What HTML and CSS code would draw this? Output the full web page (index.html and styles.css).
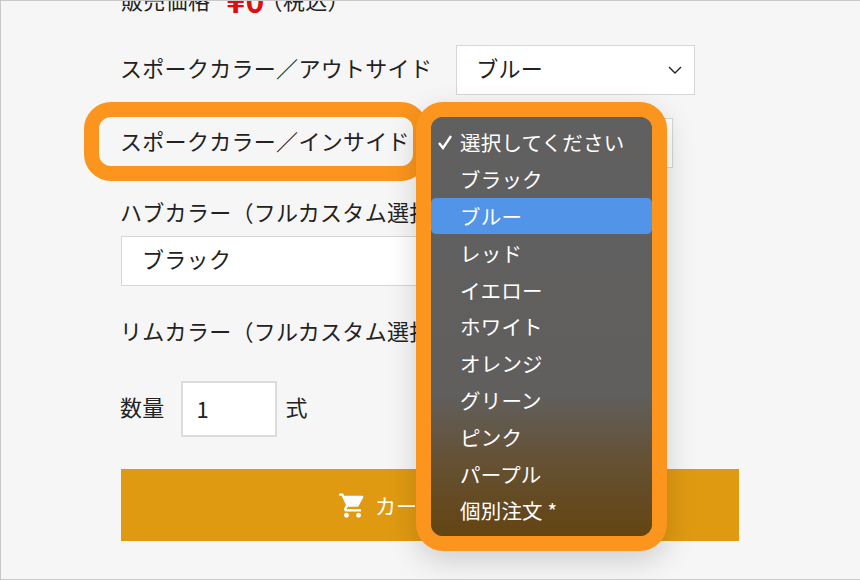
FILE: index.html
```html
<!DOCTYPE html>
<html lang="ja">
<head>
<meta charset="utf-8">
<title>スポークカラー選択</title>
<link rel="stylesheet" href="styles.css">
</head>
<body>
<div class="page">
  <form class="form">
    <div class="price-row"><span>販売価格</span><strong class="price">¥0</strong><span class="tax">（税込）</span></div>
    <div class="row row-first">
      <span class="label">スポークカラー／アウトサイド</span>
      <div class="select select-a"><span>ブルー</span><svg class="chev" width="14" height="8" viewBox="0 0 14 8"><path d="M1 1l6 6 6-6" fill="none" stroke="#222" stroke-width="1.4"/></svg></div>
    </div>
    <div class="row row-second">
      <span class="label">スポークカラー／インサイド</span>
      <div class="select select-b"><span>選択してください</span></div>
    </div>
    <div class="label stacked-label">ハブカラー（フルカスタム選択）</div>
    <div class="select select-c"><span>ブラック</span></div>
    <div class="label rim-label">リムカラー（フルカスタム選択）</div>
    <div class="qty-row">
      <span class="label qty-label">数量</span>
      <div class="qty-input">1</div>
      <span class="label qty-label">式</span>
    </div>
    <div class="cart-btn">
      <svg class="cart-icon" width="29" height="29" viewBox="0 0 24 24"><path fill="#fff" d="M7 18c-1.1 0-2 .9-2 2s.9 2 2 2 2-.9 2-2-.9-2-2-2zM1 2v2h2l3.6 7.59-1.35 2.45c-.16.28-.25.61-.25.96 0 1.1.9 2 2 2h12v-2H7.42c-.14 0-.25-.11-.25-.25l.03-.12.9-1.63h7.45c.75 0 1.41-.41 1.75-1.03l3.58-6.49A1 1 0 0 0 20 4H5.21l-.94-2H1zm16 16c-1.1 0-2 .9-2 2s.9 2 2 2 2-.9 2-2-.9-2-2-2z"/></svg>
      <span>カートに入れる</span>
    </div>
  </form>

  <div class="label-highlight"></div>

  <div class="menu-frame">
    <ul class="menu">
      <li class="item"><svg class="check" width="17" height="16" viewBox="0 0 17 16"><path d="M2 9l4 5 8-12" fill="none" stroke="#fff" stroke-width="2.4"/></svg><span>選択してください</span></li>
      <li class="item"><span class="slot"></span><span>ブラック</span></li>
      <li class="item item-active"><span class="slot"></span><span>ブルー</span></li>
      <li class="item"><span class="slot"></span><span>レッド</span></li>
      <li class="item"><span class="slot"></span><span>イエロー</span></li>
      <li class="item"><span class="slot"></span><span>ホワイト</span></li>
      <li class="item"><span class="slot"></span><span>オレンジ</span></li>
      <li class="item"><span class="slot"></span><span>グリーン</span></li>
      <li class="item"><span class="slot"></span><span>ピンク</span></li>
      <li class="item"><span class="slot"></span><span>パープル</span></li>
      <li class="item"><span class="slot"></span><span>個別注文 *</span></li>
    </ul>
  </div>
</div>
</body>
</html>
```

FILE: styles.css
```css
* { box-sizing: border-box; }

html, body {
  margin: 0;
  padding: 0;
}

body {
  width: 860px;
  height: 580px;
  overflow: hidden;
  font-family: "Noto Sans CJK JP", "Noto Sans", sans-serif;
  color: #222;
}

.page {
  position: relative;
  width: 860px;
  height: 580px;
  overflow: hidden;
  background: #f6f6f7;
  border-top: 1px solid #c9c9c9;
  border-left: 1px solid #c9c9c9;
  border-bottom: 1px solid #c9c9c9;
}

.form {
  display: flex;
  flex-direction: column;
  width: 618px;
  margin-left: 120px;
  margin-top: -17px;
}

.label {
  height: 30px;
  margin-left: -1px;
  padding-bottom: 6px;
  font-size: 22px;
  line-height: 24px;
  letter-spacing: 0.3px;
  white-space: nowrap;
}

.qty-label {
  padding-bottom: 4px;
}

.price-row {
  display: flex;
  align-items: center;
  height: 30px;
  font-size: 22px;
  letter-spacing: 0.3px;
}

.price {
  margin-left: 16px;
  margin-right: -4px;
  color: #e00d0d;
  font-size: 32px;
  font-weight: 700;
  line-height: 30px;
}

.tax {
  font-size: 22px;
}

.row {
  display: flex;
  align-items: center;
}

.row-first {
  margin-top: 31px;
  gap: 24px;
}

.row-second {
  margin-top: 23px;
  gap: 46px;
}

.select {
  display: flex;
  align-items: center;
  justify-content: space-between;
  height: 50px;
  padding: 0 12px 7px 19px;
  background: #fff;
  border: 1px solid #d6d6d6;
  font-size: 22px;
  letter-spacing: 0.3px;
  white-space: nowrap;
}

.chev {
  margin-top: 7px;
}

.select-a { width: 239px; }
.select-b { width: 217px; }

.stacked-label {
  margin-top: 31px;
}

.select-c {
  width: 300px;
  margin-top: 7px;
  padding-left: 20px;
}

.rim-label {
  margin-top: 32px;
}

.qty-row {
  display: flex;
  align-items: center;
  margin-top: 33px;
  gap: 16px;
}

.qty-input {
  width: 96px;
  height: 56px;
  padding-left: 14px;
  background: #fff;
  border: 2px solid #dcdcdc;
  font-size: 22px;
  line-height: 50px;
  margin-right: -6px;
}

.cart-btn {
  display: flex;
  align-items: center;
  justify-content: center;
  gap: 8px;
  height: 72px;
  margin-top: 32px;
  background: #e09a12;
  color: #fff;
  font-size: 21px;
}

.cart-icon {
  flex: none;
}

.label-highlight {
  position: absolute;
  left: 83px;
  top: 101px;
  width: 344px;
  height: 79px;
  border: 15px solid #fb951d;
  border-radius: 27px;
}

.menu-frame {
  position: absolute;
  left: 415px;
  top: 101px;
  width: 251px;
  height: 449px;
  border: 15px solid #fb951d;
  border-radius: 27px;
  box-shadow: 0 10px 30px rgba(0, 0, 0, 0.16);
  background: #616060;
}

.menu {
  height: 100%;
  margin: 0;
  padding: 7px 0 0;
  list-style: none;
  border-radius: 12px;
  background: linear-gradient(to bottom, #616060 0%, #605f5e 66%, #655134 82%, #644412 100%);
}

.item {
  display: flex;
  align-items: center;
  height: 36.8px;
  padding-left: 6px;
  color: #fff;
  font-size: 20.5px;
  letter-spacing: 0.2px;
  white-space: nowrap;
}

.item-active {
  background: #5294e8;
  border-radius: 5px;
}

.check, .slot {
  flex: none;
  width: 17px;
  margin-right: 6px;
}
```
